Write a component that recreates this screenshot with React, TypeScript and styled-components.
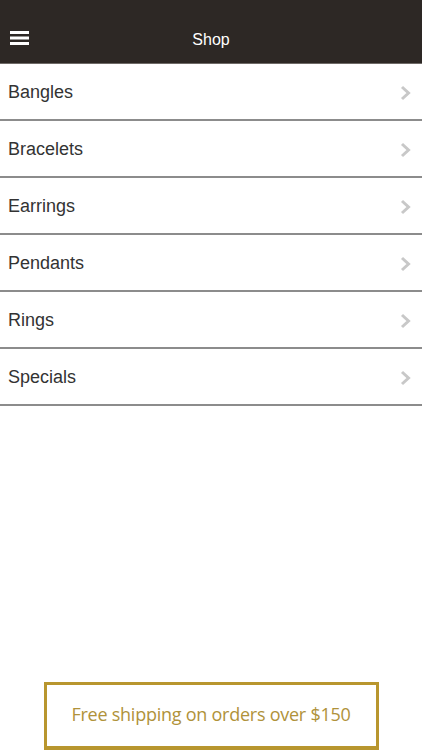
import React from "react"
import styled, { createGlobalStyle } from "styled-components"

const categories = ["Bangles", "Bracelets", "Earrings", "Pendants", "Rings", "Specials"]

const GlobalStyle = createGlobalStyle`
  html, body {
    margin: 0;
    padding: 0;
    background: #ffffff;
    font-family: "Liberation Sans", Arial, sans-serif;
  }
  * {
    box-sizing: border-box;
  }
`

const MenuIcon = () => (
  <svg width="19" height="15" viewBox="0 0 19 15">
    <rect x="0" y="0" width="19" height="3" fill="#ffffff" />
    <rect x="0" y="5.5" width="19" height="3" fill="#ffffff" />
    <rect x="0" y="11" width="19" height="3" fill="#ffffff" />
  </svg>
)

const Chevron = () => (
  <svg width="11" height="16" viewBox="0 0 11 16">
    <polyline
      points="2,2 8.5,8 2,14"
      fill="none"
      stroke="#c8c8c8"
      strokeWidth="3"
    />
  </svg>
)

const App: React.FC = () => (
  <Page>
    <GlobalStyle />
    <Header>
      <MenuButton>
        <MenuIcon />
      </MenuButton>
      <Title>Shop</Title>
    </Header>
    <List>
      {categories.map(name => (
        <Row key={name}>
          <Label>{name}</Label>
          <Chevron />
        </Row>
      ))}
    </List>
    <Footer>
      <Banner>Free shipping on orders over $150</Banner>
    </Footer>
  </Page>
)

const Page = styled.div`
  display: flex;
  flex-direction: column;
  min-height: 100vh;
`

const Header = styled.header`
  position: relative;
  display: flex;
  align-items: flex-end;
  justify-content: center;
  height: 64px;
  padding-bottom: 14px;
  background: #2d2825;
  border-bottom: 1px solid #6e6a67;
`

const MenuButton = styled.div`
  position: absolute;
  left: 10px;
  top: 31px;
  display: flex;
`

const Title = styled.h1`
  margin: 0;
  font-size: 16px;
  font-weight: normal;
  line-height: 18px;
  color: #ffffff;
`

const List = styled.ul`
  margin: 0;
  padding: 0;
  list-style: none;
`

const Row = styled.li`
  display: flex;
  align-items: center;
  justify-content: space-between;
  height: 57px;
  padding: 2px 11px 0 8px;
  border-bottom: 2px solid #8c8c8c;
`

const Label = styled.span`
  font-size: 18px;
  color: #333333;
`

const Footer = styled.div`
  display: flex;
  justify-content: center;
  margin-top: auto;
`

const Banner = styled.div`
  display: flex;
  align-items: center;
  justify-content: center;
  width: 335px;
  height: 68px;
  padding-bottom: 3px;
  border: 3px solid #b8962e;
  border-bottom-width: 4px;
  font-family: "Open Sans", "Liberation Sans", sans-serif;
  font-size: 18px;
  letter-spacing: -0.25px;
  color: #b0923a;
`

export default App
